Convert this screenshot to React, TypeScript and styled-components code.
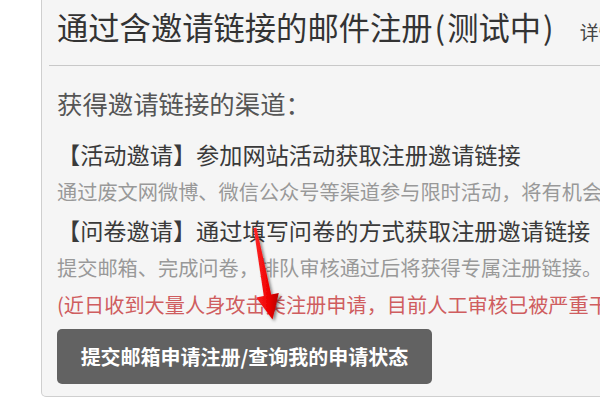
import { FC } from "react";
import styled, { createGlobalStyle } from "styled-components";

const GlobalStyle = createGlobalStyle`
  html, body {
    margin: 0;
    padding: 0;
    background: #fff;
    overflow: hidden;
  }
  body {
    font-family: "Noto Sans CJK SC", "Noto Sans", sans-serif;
    color: #333;
  }
`;

const Page = styled.div`
  position: relative;
  width: 600px;
  height: 400px;
  padding-left: 41px;
  box-sizing: border-box;
  overflow: hidden;
`;

const Panel = styled.section`
  width: 760px;
  background: #f5f5f5;
  border: 1px solid #cfcfcf;
  border-top: none;
  border-radius: 0 0 5px 5px;
  padding-bottom: 12px;
`;

const Header = styled.header`
  display: flex;
  align-items: baseline;
  gap: 24px;
  margin-left: 7px;
  padding: 5px 0 17px 8px;
  border-bottom: 1px solid #c8c8c8;
`;

const Title = styled.h1`
  margin: 0;
  font-size: 31.3px;
  line-height: 43px;
  font-weight: normal;
  color: #333;
  white-space: nowrap;
`;

const Paren = styled.span`
  display: inline-block;
  padding: 0 2px;
`;

const DetailLink = styled.span`
  font-size: 19px;
  color: #444;
  white-space: nowrap;
`;

const Body = styled.div`
  display: flex;
  flex-direction: column;
  align-items: flex-start;
  padding: 19px 15px 0;
`;

const Heading = styled.h2`
  margin: 0 0 14px;
  font-size: 25.4px;
  line-height: 36px;
  font-weight: normal;
  color: #555;
`;

const Line = styled.p<{ $tone?: "main" | "muted" | "alert" }>`
  margin: 0;
  white-space: nowrap;
  font-size: ${({ $tone }) => ($tone === "main" || !$tone ? "23.2px" : "20.2px")};
  line-height: ${({ $tone }) => ($tone === "alert" ? "36px" : "38px")};
  color: ${({ $tone }) =>
    $tone === "muted" ? "#999" : $tone === "alert" ? "#cf5d5f" : "#3a3a3a"};
`;

const SubmitButton = styled.button`
  margin-top: 6px;
  width: 375px;
  height: 55px;
  border: none;
  border-radius: 5px;
  background: #626262;
  color: #fff;
  font-family: inherit;
  font-size: 20px;
  font-weight: bold;
  cursor: pointer;
`;

const Arrow = styled.svg`
  position: absolute;
  left: 240px;
  top: 215px;
  overflow: visible;
  pointer-events: none;
`;

const PointerArrow: FC = () => (
  <Arrow width="50" height="115" viewBox="240 215 50 115">
    <defs>
      <linearGradient id="arrowFill" x1="0" y1="0" x2="1" y2="0">
        <stop offset="0" stopColor="#ff2a2a" />
        <stop offset="0.6" stopColor="#ee0000" />
        <stop offset="1" stopColor="#b80000" />
      </linearGradient>
      <filter id="arrowShadow" x="-50%" y="-20%" width="200%" height="140%">
        <feDropShadow dx="2" dy="2" stdDeviation="1.6" floodColor="#000" floodOpacity="0.45" />
      </filter>
    </defs>
    <polygon
      points="253.6,228 256.4,227.4 271.2,294.5 278.8,293.1 272.5,319.5 256.2,297.5 263.8,296.1"
      fill="url(#arrowFill)"
      filter="url(#arrowShadow)"
    />
  </Arrow>
);

export default function App() {
  return (
    <>
      <GlobalStyle />
      <Page>
        <Panel>
          <Header>
            <Title>
              通过含邀请链接的邮件注册<Paren>(</Paren>测试中<Paren>)</Paren>
            </Title>
            <DetailLink>详情</DetailLink>
          </Header>
          <Body>
            <Heading>获得邀请链接的渠道：</Heading>
            <Line>【活动邀请】参加网站活动获取注册邀请链接</Line>
            <Line $tone="muted">
              通过废文网微博、微信公众号等渠道参与限时活动，将有机会获得注册邀请链接。
            </Line>
            <Line>【问卷邀请】通过填写问卷的方式获取注册邀请链接</Line>
            <Line $tone="muted">提交邮箱、完成问卷，排队审核通过后将获得专属注册链接。</Line>
            <Line $tone="alert">
              (近日收到大量人身攻击类注册申请，目前人工审核已被严重干扰，请耐心等待)
            </Line>
            <SubmitButton>提交邮箱申请注册/查询我的申请状态</SubmitButton>
          </Body>
        </Panel>
        <PointerArrow />
      </Page>
    </>
  );
}
